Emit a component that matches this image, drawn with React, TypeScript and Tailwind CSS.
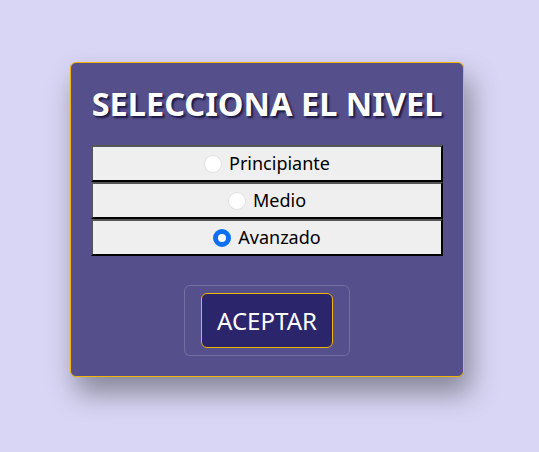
import { useState } from "react";

const niveles = ["Principiante", "Medio", "Avanzado"];

const App = () => {
  const [nivel, setNivel] = useState("Avanzado");

  return (
    <div className="min-h-screen w-full bg-[#d8d6f4] flex justify-center items-start pt-[62px] pr-[5px] font-['Noto_Sans',sans-serif]">
      <div className="w-[394px] bg-[#554f8b] border border-[#f5b400] rounded-[6px] shadow-[6px_16px_28px_rgba(0,0,0,0.38)] px-5 pt-[21px] pb-5">
        <h1 className="-mx-3 whitespace-nowrap text-center text-white font-bold text-[32.5px] leading-[40px] [text-shadow:2px_2px_2px_#1b1740]">
          SELECCIONA EL NIVEL
        </h1>

        {/* Opciones */}
        <div className="mt-[21px] flex flex-col">
          {niveles.map((n) => (
            <label
              key={n}
              className="h-[37px] bg-[#efefef] border-2 border-t-[#555] border-l-[#555] border-b-black border-r-black flex items-center justify-center gap-[7px] text-[18px] text-black cursor-pointer"
            >
              <input
                type="radio"
                name="nivel"
                checked={nivel === n}
                onChange={() => setNivel(n)}
                className="appearance-none w-[18px] h-[18px] m-0 rounded-full bg-white border border-[#e2e2e2] checked:border-[5px] checked:border-[#0f6ff0]"
              />
              <span>{n}</span>
            </label>
          ))}
        </div>

        {/* Boton */}
        <div className="mt-[29px] flex justify-center">
          <div className="border border-[#726ea0] rounded-[6px] px-4 py-[7px]">
            <button className="w-[132px] h-[55px] bg-[#2b256b] border border-[#f5b400] rounded-[6px] text-white text-[24px]">
              ACEPTAR
            </button>
          </div>
        </div>
      </div>
    </div>
  );
};

export default App;
